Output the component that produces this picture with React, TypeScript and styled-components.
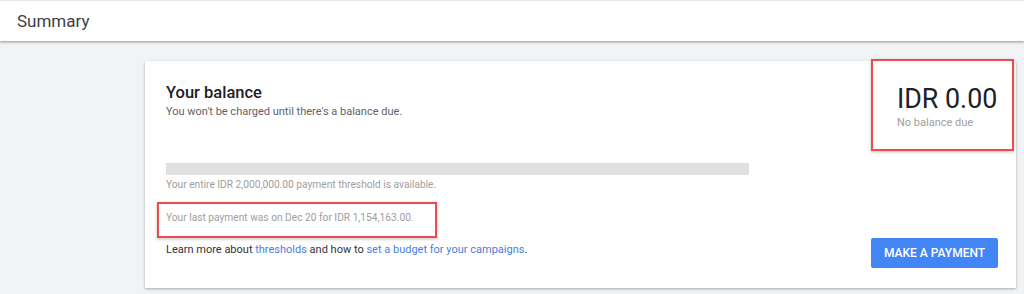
import styled, { createGlobalStyle } from 'styled-components';

const GlobalStyle = createGlobalStyle`
  html, body {
    margin: 0;
    padding: 0;
    background: #f1f3f4;
    font-family: Roboto, "Liberation Sans", Arial, sans-serif;
  }
  * {
    box-sizing: border-box;
  }
`;

const App = () => {
  return (
    <Page>
      <GlobalStyle />
      <Header>
        <HeaderTitle>Summary</HeaderTitle>
      </Header>
      <Main>
        <Card>
          <Details>
            <Title>Your balance</Title>
            <Subtitle>You won&apos;t be charged until there&apos;s a balance due.</Subtitle>
            <ThresholdBar />
            <Note>Your entire IDR 2,000,000.00 payment threshold is available.</Note>
            <Highlighted>
              <Note>Your last payment was on Dec 20 for IDR 1,154,163.00.</Note>
            </Highlighted>
            <Help>
              Learn more about <Link href="#">thresholds</Link> and how to{' '}
              <Link href="#">set a budget for your campaigns</Link>.
            </Help>
          </Details>
          <Side>
            <BalanceBox>
              <Amount>IDR 0.00</Amount>
              <AmountCaption>No balance due</AmountCaption>
            </BalanceBox>
            <PayButton>Make a payment</PayButton>
          </Side>
        </Card>
      </Main>
    </Page>
  );
};

export default App;

const Page = styled.div`
  width: 1024px;
  height: 294px;
  overflow: hidden;
`;

const Header = styled.div`
  height: 41px;
  background: #fff;
  border-top: 1px solid #e8e8e8;
  box-shadow: 0 1px 2px rgba(0, 0, 0, 0.28), 0 2px 3px rgba(0, 0, 0, 0.1);
  display: flex;
  align-items: center;
  padding-left: 17px;
  position: relative;
`;

const HeaderTitle = styled.h1`
  margin: 0;
  font-size: 17px;
  font-weight: 400;
  color: #3c4043;
`;

const Main = styled.div`
  padding: 20px 8px 0 145px;
`;

const Card = styled.div`
  width: 871px;
  height: 227px;
  background: #fff;
  box-shadow: 0 1px 2px rgba(0, 0, 0, 0.22), 0 1px 4px rgba(0, 0, 0, 0.1);
  display: flex;
  padding: 0 2px 0 21px;
`;

const Details = styled.div`
  flex: 1;
  padding-top: 20px;
`;

const Title = styled.h2`
  margin: 0;
  font-size: 16.5px;
  line-height: 23px;
  font-weight: 500;
  color: #202124;
`;

const Subtitle = styled.p`
  margin: 0;
  font-size: 11px;
  line-height: 16px;
  color: #5f6368;
`;

const ThresholdBar = styled.div`
  width: 583px;
  height: 12px;
  margin-top: 43px;
  background: #e0e0e0;
`;

const Note = styled.p`
  margin: 2px 0 0;
  font-size: 10.2px;
  line-height: 15px;
  color: #9e9e9e;
`;

const Highlighted = styled.div`
  display: inline-block;
  margin: 10px 0 0 -9px;
  height: 36px;
  padding: 4px 21px 0 7px;
  border: 2px solid #ef4b4f;
  box-shadow: 0 1px 3px rgba(0, 0, 0, 0.25);
`;

const Help = styled.p`
  margin: 4px 0 0;
  font-size: 11px;
  line-height: 16px;
  color: #333;
`;

const Link = styled.a`
  color: #4a7fdc;
  text-decoration: none;
`;

const Side = styled.div`
  width: 143px;
  display: flex;
  flex-direction: column;
  align-items: flex-start;
  margin-top: -2px;
  padding-bottom: 20px;
`;

const BalanceBox = styled.div`
  width: 143px;
  height: 92px;
  border: 2px solid #ef4b4f;
  box-shadow: 0 1px 3px rgba(0, 0, 0, 0.25);
  padding: 23px 0 0 24px;
`;

const Amount = styled.div`
  font-size: 26.8px;
  line-height: 30px;
  color: #202124;
`;

const AmountCaption = styled.div`
  margin-top: 1px;
  font-size: 11px;
  line-height: 16px;
  color: #9e9e9e;
`;

const PayButton = styled.button`
  margin-top: auto;
  width: 127px;
  height: 30px;
  border: none;
  border-radius: 2px;
  background: #4285f4;
  color: #fff;
  font-family: Roboto, "Liberation Sans", Arial, sans-serif;
  font-size: 12px;
  font-weight: 500;
  text-transform: uppercase;
  padding: 0;
  cursor: pointer;
`;
